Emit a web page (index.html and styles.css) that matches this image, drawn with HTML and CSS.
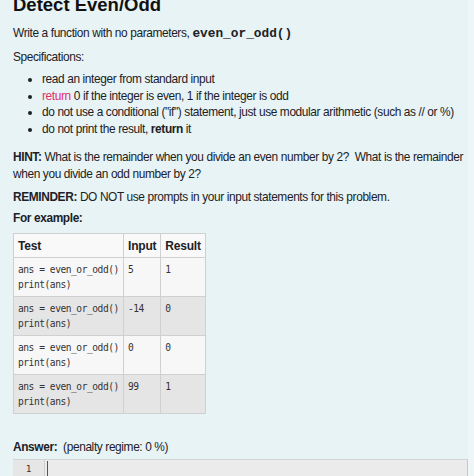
FILE: index.html
```html
<!DOCTYPE html>
<html>
<head>
<meta charset="utf-8">
<link rel="stylesheet" href="styles.css">
</head>
<body>
<div class="page">
  <div class="qtext">
    <h1 class="title">Detect Even/Odd</h1>
    <p class="para intro">Write a function with no parameters, <code class="fn">even_or_odd()</code></p>
    <p class="para spec-head">Specifications:</p>
    <ul class="specs">
      <li>read an integer from standard input</li>
      <li><span class="kw">return</span> 0 if the integer is even, 1 if the integer is odd</li>
      <li>do not use a conditional ("if") statement, just use modular arithmetic (such as // or %)</li>
      <li>do not print the result, <b>return</b> it</li>
    </ul>
    <p class="para hint"><b>HINT:</b> What is the remainder when you divide an even number by 2?&nbsp; What is the remainder when you divide an odd number by 2?</p>
    <p class="para reminder"><b>REMINDER:</b> DO NOT use prompts in your input statements for this problem.</p>
    <p class="para ex"><b>For example:</b></p>
    <table class="examples">
      <thead>
        <tr><th class="c1">Test</th><th class="c2">Input</th><th class="c3">Result</th></tr>
      </thead>
      <tbody>
        <tr class="odd"><td><pre>ans = even_or_odd()
print(ans)</pre></td><td><pre>5</pre></td><td><pre>1</pre></td></tr>
        <tr class="even"><td><pre>ans = even_or_odd()
print(ans)</pre></td><td><pre>-14</pre></td><td><pre>0</pre></td></tr>
        <tr class="odd"><td><pre>ans = even_or_odd()
print(ans)</pre></td><td><pre>0</pre></td><td><pre>0</pre></td></tr>
        <tr class="even"><td><pre>ans = even_or_odd()
print(ans)</pre></td><td><pre>99</pre></td><td><pre>1</pre></td></tr>
      </tbody>
    </table>
    <p class="answer"><b>Answer:</b>&nbsp; (penalty regime: 0 %)</p>
    <div class="editor">
      <div class="gutter">1</div>
      <div class="code"><span class="cursor"></span></div>
    </div>
  </div>
</div>
</body>
</html>
```

FILE: styles.css
```css
html, body {
  margin: 0;
  padding: 0;
  background: #eef6f7;
}
.page {
  width: 468px;
  height: 476px;
  overflow: hidden;
  background: #e7f3f5;
}
.qtext {
  padding: 0 0 0 13px;
  font-family: "Liberation Sans", Arial, sans-serif;
  font-size: 11.9px;
  letter-spacing: -0.38px;
  line-height: 17px;
  color: #1d2125;
}
.title {
  margin: -6px 0 0 0;
  font-size: 18.5px;
  letter-spacing: 0;
  line-height: 22px;
  font-weight: bold;
  color: #111;
}
.para {
  margin: 0;
}
.intro {
  margin-top: 9px;
  margin-bottom: 7px;
}
.spec-head {
  margin-bottom: 5px;
}
.fn {
  font-family: "Liberation Mono", "Courier New", monospace;
  font-weight: bold;
  font-size: 12.8px;
  letter-spacing: 0;
}
.specs {
  margin: 0 0 11px 0;
  padding-left: 29px;
}
.specs li {
  line-height: 16.7px;
}
.kw {
  color: #e0306a;
}
.hint {
  margin-bottom: 6px;
}
.reminder {
  margin-bottom: 4px;
}
.ex {
  margin-bottom: 6px;
}
.examples {
  border-collapse: collapse;
  font-size: 12px;
  letter-spacing: -0.2px;
}
.examples th {
  text-align: left;
  font-weight: bold;
  background: #f9f9f9;
  border: 1px solid #d0d0d0;
  padding: 4px 4px 3px 4px;
  height: 16px;
  line-height: 16px;
}
.examples td {
  border: 1px solid #d0d0d0;
  padding: 4px 4px 4px 4px;
  vertical-align: top;
  height: 30px;
}
.c1 { width: 101px; }
.c2 { width: 28px; }
.c3 { width: 34px; }
.examples tr.odd td { background: #f7f7f7; }
.examples tr.even td { background: #e5e5e5; }
.examples pre {
  margin: 0;
  font-family: "DejaVu Sans Mono", "Liberation Mono", monospace;
  font-size: 9.6px;
  letter-spacing: -0.47px;
  line-height: 15px;
  color: #333;
}
.answer {
  margin: 25px 0 0 0;
}
.editor {
  margin-top: 3px;
  display: flex;
  height: 24px;
  width: 454px;
  border-top: 1px solid #d3d3d3;
  border-right: 1px solid #c8c8c8;
  background: #ebebeb;
}
.gutter {
  width: 31px;
  text-align: center;
  font-family: "DejaVu Sans Mono", monospace;
  font-size: 9.5px;
  letter-spacing: 0;
  line-height: 17px;
  color: #333;
  background: #e6e6e6;
  border-right: 1px solid #d0d0d0;
}
.code {
  flex: 1;
  padding-left: 2px;
}
.cursor {
  display: block;
  width: 1px;
  height: 16px;
  margin-top: 1px;
  background: #555;
}
```
